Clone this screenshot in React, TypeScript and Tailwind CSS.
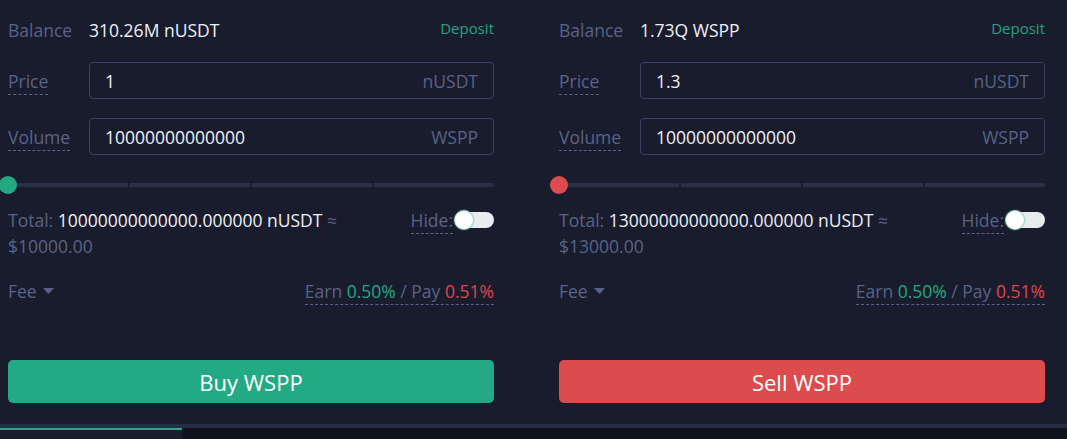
import React, { useState } from 'react';

type Side = 'buy' | 'sell';

const panels = [
  {
    side: 'buy' as Side,
    balance: '310.26M nUSDT',
    price: '1',
    volume: '10000000000000',
    total: '10000000000000.000000',
    usd: '$10000.00',
    action: 'Buy WSPP',
  },
  {
    side: 'sell' as Side,
    balance: '1.73Q WSPP',
    price: '1.3',
    volume: '10000000000000',
    total: '13000000000000.000000',
    usd: '$13000.00',
    action: 'Sell WSPP',
  },
];

function Field({ label, value, unit }: { label: string; value: string; unit: string }) {
  return (
    <div className="flex items-center">
      <div className="w-[81px] shrink-0">
        <span className="border-b border-dashed border-[#5a6286] pb-[1px] text-[#5a6286]">{label}</span>
      </div>
      <div className="flex h-[37px] flex-1 items-center justify-between rounded-[4px] border border-[#3b405e] px-[15px]">
        <span className="text-[#eef0f7]">{value}</span>
        <span className="text-[#5a6286]">{unit}</span>
      </div>
    </div>
  );
}

function Slider({ side }: { side: Side }) {
  const thumb = side === 'buy' ? 'bg-[#22a981]' : 'bg-[#dc4b4d]';
  return (
    <div className="relative flex h-[18px] items-center">
      <div className="flex h-[4px] flex-1 gap-[2px] overflow-hidden rounded-full">
        <div className="flex-1 bg-[#2b2f47]" />
        <div className="flex-1 bg-[#2b2f47]" />
        <div className="flex-1 bg-[#2b2f47]" />
        <div className="flex-1 bg-[#2b2f47]" />
      </div>
      <div className={`absolute -left-[9px] top-0 h-[18px] w-[18px] rounded-full ${thumb}`} />
    </div>
  );
}

function Toggle() {
  const [on, setOn] = useState(false);
  return (
    <button
      onClick={() => setOn(!on)}
      className="relative h-[16px] w-[39px] rounded-full bg-[#e9ebee]"
    >
      <span
        className={`absolute top-[-1px] h-[18px] w-[18px] rounded-full bg-white shadow-[0_0_0_1px_#9fd9c8,0_0_3px_#5cc4a6] ${
          on ? 'left-[21px]' : 'left-0'
        }`}
      />
    </button>
  );
}

function OrderPanel({ p }: { p: (typeof panels)[number] }) {
  const isBuy = p.side === 'buy';
  return (
    <div className="flex w-[486px] flex-col pt-[17px]">
      {/* balance */}
      <div className="flex h-[26px] items-center justify-between">
        <div className="flex items-center">
          <span className="w-[81px] text-[#5a6286]">Balance</span>
          <span className="text-[#eef0f7]">{p.balance}</span>
        </div>
        <span className="-mt-[4px] text-[15px] text-[#1fa57f]">Deposit</span>
      </div>

      <div className="mt-[19px] flex flex-col gap-[19px]">
        <Field label="Price" value={p.price} unit="nUSDT" />
        <Field label="Volume" value={p.volume} unit="WSPP" />
      </div>

      <div className="mt-[21px]">
        <Slider side={p.side} />
      </div>

      {/* total */}
      <div className="mt-[13px] flex items-start justify-between">
        <div className="text-[#5a6286]">
          Total: <span className="text-[#eef0f7]">{p.total} nUSDT</span> ≈
          <br />
          {p.usd}
        </div>
        <div className="flex h-[26px] items-center gap-[2px]">
          <span className="border-b border-dashed border-[#5a6286] text-[#5a6286]">Hide:</span>
          <Toggle />
        </div>
      </div>

      {/* fee */}
      <div className="mt-[19px] flex h-[26px] items-center justify-between">
        <div className="flex items-center gap-[6px] text-[#5a6286]">
          Fee
          <svg width="11" height="6" viewBox="0 0 11 6">
            <path d="M0 0h11L5.5 6z" fill="#5a6286" />
          </svg>
        </div>
        <span className="border-b border-dashed border-[#5a6286] text-[#5a6286]">
          Earn <span className="text-[#22a981]">0.50%</span> / Pay <span className="text-[#e0454a]">0.51%</span>
        </span>
      </div>

      <button
        className={`mt-[56px] h-[43px] rounded-[5px] text-[22px] text-white ${
          isBuy ? 'bg-[#23aa84]' : 'bg-[#dc4b4d]'
        }`}
      >
        {p.action}
      </button>
    </div>
  );
}

export default function App() {
  return (
    <div
      className="h-[439px] w-[1067px] overflow-hidden bg-[#191c2d] text-[17.5px] leading-[26px]"
      style={{ fontFamily: '"Open Sans", "Noto Sans", sans-serif' }}
    >
      <div className="flex gap-[65px] pl-[8px]">
        {panels.map((p) => (
          <OrderPanel key={p.side} p={p} />
        ))}
      </div>

      {/* tab strip under the form */}
      <div className="mt-[21px] h-[4px] bg-[#272d45]" />
      <div className="flex h-[11px]">
        <div className="w-[182px] border-t-2 border-[#23aa84] bg-[#191c2d]" />
        <div className="flex-1 bg-[#10121c]" />
      </div>
    </div>
  );
}
